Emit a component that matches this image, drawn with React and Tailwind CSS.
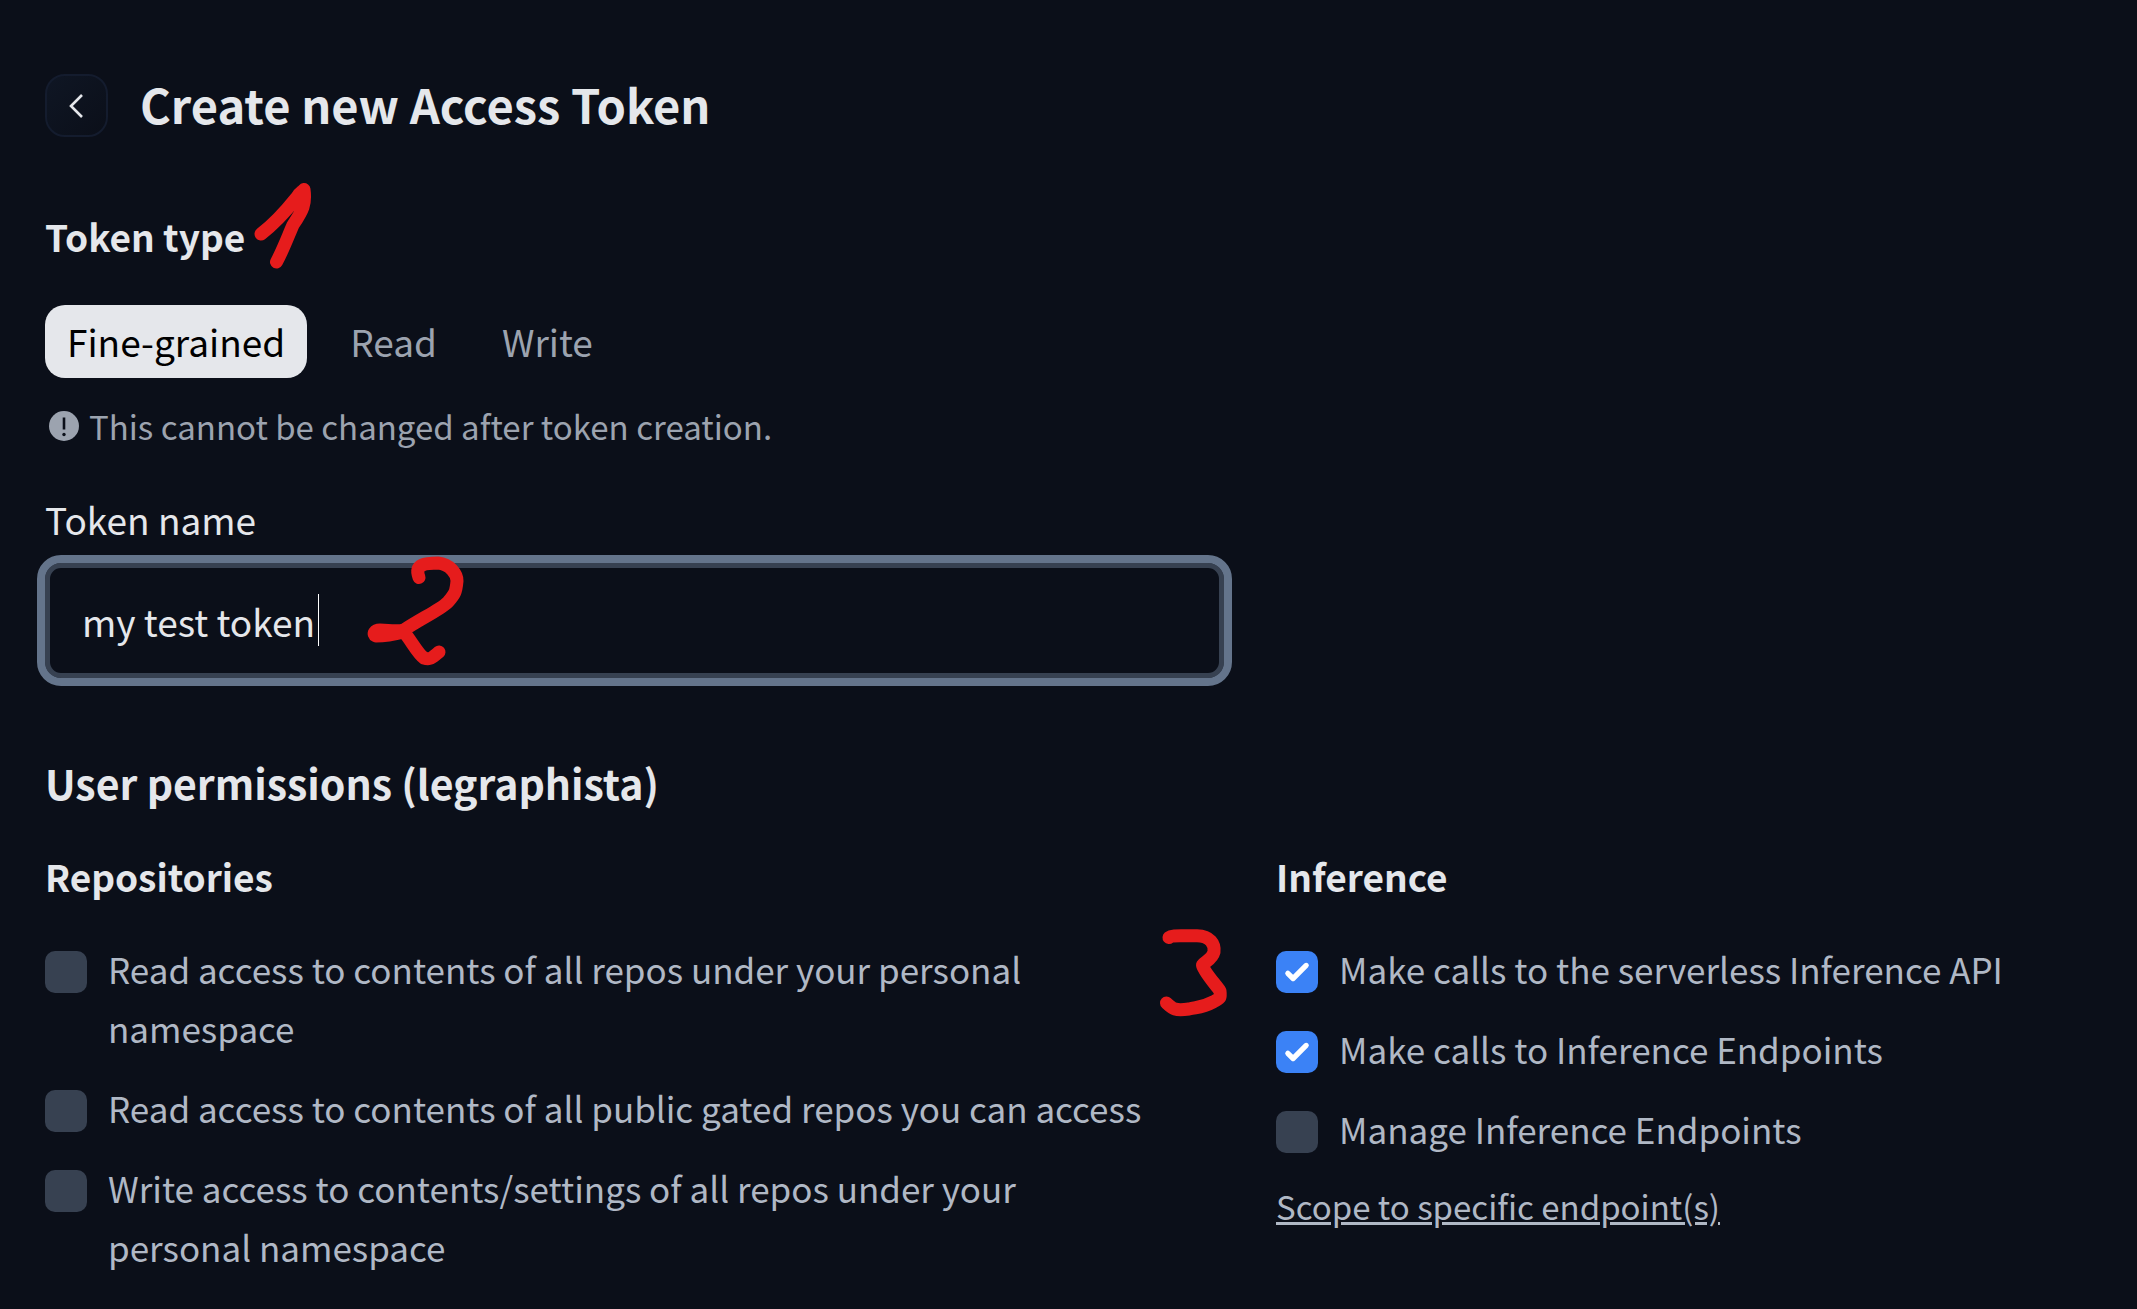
import { useState } from "react";

const MARK = "#e61c1c";

function Mark({ className, viewBox, label, d }) {
  return (
    <svg aria-label={label} role="img" viewBox={viewBox} className={className} fill="none" stroke={MARK} strokeWidth="13" strokeLinecap="round" strokeLinejoin="round">
      <path d={d} />
    </svg>
  );
}

function Permission({ id, label, defaultChecked }) {
  return (
    <li className="flex items-start gap-[21px]">
      <span className="relative mt-[12px] h-[42px] w-[42px] shrink-0">
        <input id={id} type="checkbox" defaultChecked={defaultChecked} className="peer block h-full w-full appearance-none rounded-[10px] bg-[#374151] checked:bg-[#3b82f6]" />
        <svg viewBox="0 0 16 16" className="pointer-events-none absolute inset-0 hidden h-full w-full peer-checked:block" fill="#fff" aria-hidden="true">
          <path d="M12.207 4.793a1 1 0 0 1 0 1.414l-5 5a1 1 0 0 1-1.414 0l-2-2a1 1 0 0 1 1.414-1.414L6.5 9.086l4.293-4.293a1 1 0 0 1 1.414 0z" />
        </svg>
      </span>
      <label htmlFor={id} className="text-[35px] leading-[59px] text-[#b0b8c5]">{label}</label>
    </li>
  );
}

export default function App() {
  const [type, setType] = useState("Fine-grained");
  return (
    <main className="min-h-screen overflow-hidden bg-[#0b0f19] px-[45px] pt-[74px] font-['Noto_Sans_CJK_SC',sans-serif] text-[#e5e7eb]">
      <header className="flex items-start gap-[32px]">
        <button type="button" aria-label="Back" className="flex h-[63px] w-[63px] items-center justify-center rounded-[20px] border-2 border-[#141c2e] bg-linear-to-br from-[#0f1624] to-[#0b0f19]">
          <svg viewBox="0 0 24 24" className="h-[24px] w-[24px]" fill="none" stroke="currentColor" strokeWidth="2.6" aria-hidden="true">
            <path d="M17 1 6 12l11 11" />
          </svg>
        </button>
        <h1 className="text-[47px] leading-[60px] font-bold">Create new Access Token</h1>
      </header>

      <section className="mt-[69px]">
        <div className="relative w-fit">
          <h2 className="text-[37px] leading-[60px] font-bold">Token type</h2>
          <Mark label="1" viewBox="0 0 60 90" className="absolute top-[-26px] left-[208px] h-[90px] w-[60px]" d="M8 54C26 40 36 27 44 17C47 12 49 12 51 9.5C53 24 50 30 40 45C36 54 30 70 23.5 82" />
        </div>
        <div className="mt-[39px] flex gap-[21px]">
          {["Fine-grained", "Read", "Write"].map((name) => (
            <button key={name} type="button" aria-pressed={type === name} onClick={() => setType(name)} className={type === name ? "rounded-[20px] bg-[#e5e7eb] px-[22px] text-[37px] leading-[73px] text-black" : "px-[22px] text-[37px] leading-[73px] text-[#9ca3af]"}>
              {name}
            </button>
          ))}
        </div>
        <p className="mt-[20px] flex items-center gap-[10px] pl-[4px] text-[33px] leading-[56px] text-[#9ca3af]">
          <svg viewBox="0 0 30 30" className="h-[30px] w-[30px]" aria-hidden="true">
            <circle cx="15" cy="15" r="15" fill="currentColor" />
            <path d="M15 6.500v12" stroke="#0b0f19" strokeWidth="2.6" />
            <circle cx="15" cy="23.500" r="1.700" fill="#0b0f19" />
          </svg>
          This cannot be changed after token creation.
        </p>
      </section>

      <div className="mt-[35px] grid grid-cols-[1179fr_816fr] gap-x-[52px]">
        <div className="relative">
          <label htmlFor="token-name" className="block text-[37px] leading-[60px]">Token name</label>
          <input id="token-name" type="text" defaultValue="my test token" className="mt-[14px] block h-[115px] w-full rounded-[16px] border-[5px] border-[#374151] bg-[#0b0f19] px-[32px] text-[37px] outline-8 outline-[#64748b]" />
          <span aria-hidden="true" className="absolute top-[105px] left-[273px] h-[52px] w-px bg-white" />
          <Mark label="2" viewBox="0 0 110 120" className="absolute top-[61px] left-[317px] h-[120px] w-[110px]" d="M57 27.5C52 14 64 13 76 13C88 14 95 24 95 31C94 42 93 44 86 52C78 60 60 68 42 80C34 82 26 80 18 80C13 80 10 84 14 86C24 86 34 84 42 82C50 92 56 104 62 108C68 110 70 108 77 102" />
        </div>
      </div>

      <section className="mt-[70px]">
        <h2 className="text-[41px] leading-[68px] font-bold">User permissions (legraphista)</h2>
        <div className="mt-[30px] grid grid-cols-[1179fr_816fr] gap-x-[52px]">
          <div>
            <h3 className="text-[37px] leading-[60px] font-bold">Repositories</h3>
            <ul className="mt-[33px] flex flex-col gap-[21px] pr-[64px]">
              <Permission id="repo-read" label="Read access to contents of all repos under your personal namespace" />
              <Permission id="repo-gated" label="Read access to contents of all public gated repos you can access" />
              <Permission id="repo-write" label="Write access to contents/settings of all repos under your personal namespace" />
            </ul>
          </div>
          <div className="relative">
            <h3 className="text-[37px] leading-[60px] font-bold">Inference</h3>
            <Mark label="3" viewBox="0 0 80 100" className="absolute top-[79px] left-[-121px] h-[100px] w-[80px]" d="M14 12.500C17 10 24 11 42 10.800C55 11 60 19 59 27C57 35 50 36 47.500 40C48 46 62 61 65 66C66 74 65 73 58 77C47 83 42 82 34 84C20 86 18 84 11.500 78" />
            <ul className="mt-[33px] flex flex-col gap-[21px]">
              <Permission id="inf-serverless" label="Make calls to the serverless Inference API" defaultChecked />
              <Permission id="inf-endpoints" label="Make calls to Inference Endpoints" defaultChecked />
              <Permission id="inf-manage" label="Manage Inference Endpoints" />
            </ul>
            <a href="#scope" className="mt-[20px] inline-block text-[33px] leading-[56px] text-[#b0b8c5] underline">Scope to specific endpoint(s)</a>
          </div>
        </div>
      </section>
    </main>
  );
}
